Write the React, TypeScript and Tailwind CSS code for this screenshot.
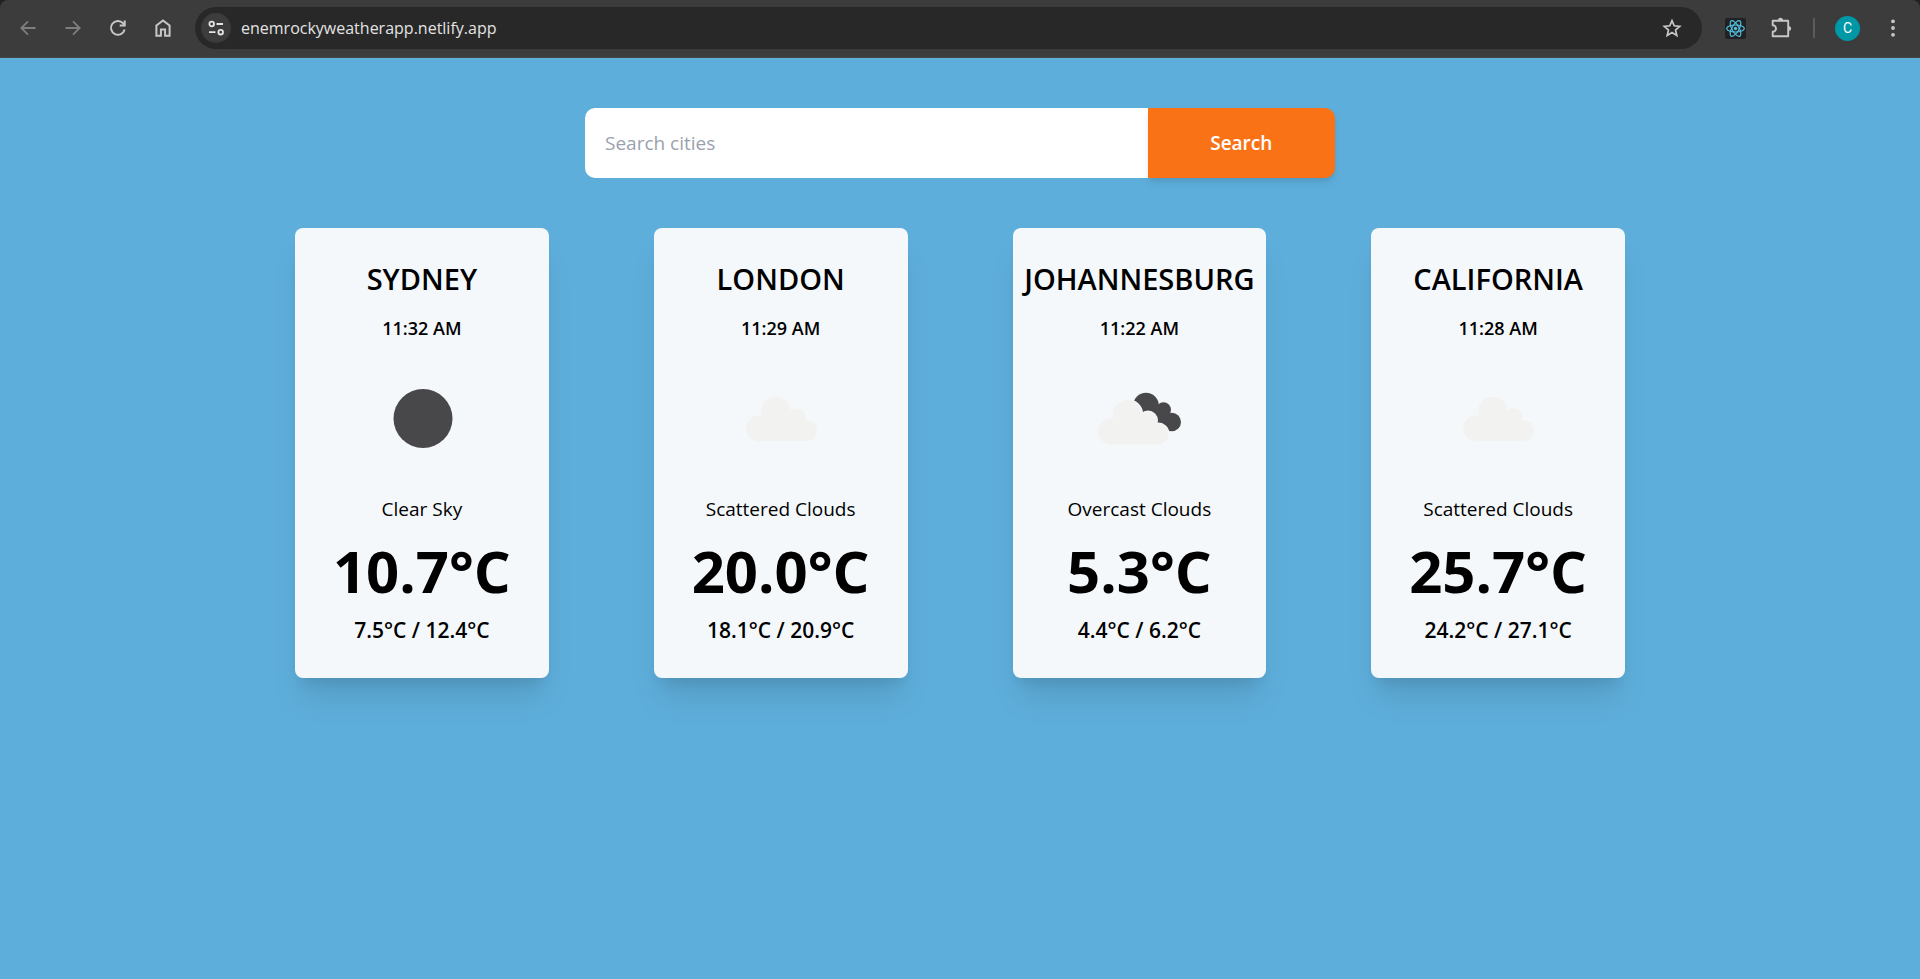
import type { ReactNode } from "react";

type Sky = "clear" | "scattered" | "overcast";

interface City {
  name: string;
  time: string;
  sky: Sky;
  label: string;
  temp: string;
  low: string;
  high: string;
}

const cities: City[] = [
  { name: "Sydney", time: "11:32 AM", sky: "clear", label: "Clear Sky", temp: "10.7", low: "7.5", high: "12.4" },
  { name: "London", time: "11:29 AM", sky: "scattered", label: "Scattered Clouds", temp: "20.0", low: "18.1", high: "20.9" },
  { name: "Johannesburg", time: "11:22 AM", sky: "overcast", label: "Overcast Clouds", temp: "5.3", low: "4.4", high: "6.2" },
  { name: "California", time: "11:28 AM", sky: "scattered", label: "Scattered Clouds", temp: "25.7", low: "24.2", high: "27.1" },
];

function CloudShape() {
  return (
    <>
      <circle cx="13" cy="31.500" r="13" />
      <circle cx="29.500" cy="14.700" r="14.700" />
      <circle cx="50" cy="20.500" r="9" />
      <circle cx="60" cy="34" r="10.500" />
      <path d="M13 44.500V25L40 18H50L60 26V44.500Z" />
    </>
  );
}

function SkyIcon({ sky }: { sky: Sky }) {
  return (
    <svg viewBox="0 0 100 100" className="size-[100px]" aria-hidden="true">
      {sky === "clear" && <circle cx="51" cy="50.500" r="29.500" fill="#48484a" />}
      {sky === "scattered" && (
        <g transform="translate(15.300 28.700)" fill="#f2f2f0">
          <CloudShape />
        </g>
      )}
      {sky === "overcast" && (
        <>
          <g fill="#48484a">
            <circle cx="57" cy="37.500" r="12.800" />
            <circle cx="74.500" cy="41.800" r="7.500" />
            <circle cx="82.800" cy="54" r="9.200" />
            <path d="M60 30L74 41L84 54L76 60L56 52Z" />
          </g>
          <g transform="translate(9 32)" fill="#f4f8fb" stroke="#f4f8fb" strokeWidth="2">
            <CloudShape />
          </g>
          <g transform="translate(9 32)" fill="#f2f2f0">
            <CloudShape />
          </g>
        </>
      )}
    </svg>
  );
}

function BarButton({ label, children }: { label: string; children: ReactNode }) {
  return (
    <button type="button" aria-label={label} className="flex size-[45px] shrink-0 items-center justify-center">
      {children}
    </button>
  );
}

function BrowserBar() {
  return (
    <div className="bg-[#202124]">
      <header className="flex h-[58px] items-center rounded-t-lg border-b border-[#474747] bg-[#3c3c3c] px-[5px] pb-px text-[#c7c7c7]">
        <BarButton label="Back">
          <svg width="20" height="20" viewBox="0 0 20 20" fill="none" stroke="#7e7e7e" strokeWidth="1.800">
            <path d="M17.500 10H3.500M10 3.300L3.300 10l6.700 6.700" />
          </svg>
        </BarButton>
        <BarButton label="Forward">
          <svg width="20" height="20" viewBox="0 0 20 20" fill="none" stroke="#7e7e7e" strokeWidth="1.800">
            <path d="M2.500 10h14M10 3.300l6.700 6.700-6.700 6.700" />
          </svg>
        </BarButton>
        <BarButton label="Reload">
          <svg width="20" height="20" viewBox="0 0 20 20" fill="none" stroke="currentColor" strokeWidth="2">
            <path d="M16.600 11.500A6.900 6.900 0 1 1 15 5.200L16.500 7" />
            <path d="M16.700 2.500v5h-5" />
          </svg>
        </BarButton>
        <BarButton label="Home">
          <svg width="20" height="20" viewBox="0 0 20 20" fill="none" stroke="currentColor" strokeWidth="2">
            <path d="M3.400 7.500L10 2.400l6.600 5.100v10.300h-4.500v-6.300H7.900v6.300H3.400z" />
          </svg>
        </BarButton>
        <div className="ml-[10px] flex h-[42px] min-w-0 flex-1 items-center rounded-full bg-[#282828] pr-5 pl-1.5">
          <button
            type="button"
            aria-label="View site information"
            className="flex size-[30px] shrink-0 items-center justify-center rounded-full bg-[#3c3c3c] text-[#e3e3e3]"
          >
            <svg width="18" height="18" viewBox="0 0 18 18" fill="none" stroke="currentColor" strokeWidth="1.800">
              <circle cx="4.700" cy="5" r="2.300" />
              <path d="M9.500 5H16M2 13.200h6.500" />
              <circle cx="13.700" cy="13.200" r="2.300" />
            </svg>
          </button>
          <input
            type="text"
            aria-label="Address"
            defaultValue="enemrockyweatherapp.netlify.app"
            className="ml-2.5 min-w-0 flex-1 bg-transparent text-base text-[#e3e3e3] outline-none"
          />
          <button type="button" aria-label="Bookmark this page">
            <svg width="20" height="20" viewBox="0 0 20 20" fill="none" stroke="currentColor" strokeWidth="1.700">
              <path d="M10 2.700l2.200 5.100 5.500.5-4.200 3.700 1.300 5.400L10 14.500l-4.800 2.900 1.300-5.400-4.200-3.700 5.500-.5z" />
            </svg>
          </button>
        </div>
        <div className="flex shrink-0 items-center">
          <button type="button" aria-label="React Developer Tools" className="ml-[23px] rounded-xs bg-[#202124]">
            <svg width="21" height="21" viewBox="0 0 21 21" fill="none" stroke="#53c1de" strokeWidth="1.200">
              <ellipse cx="10.500" cy="10.500" rx="8.800" ry="3.500" />
              <ellipse cx="10.500" cy="10.500" rx="8.800" ry="3.500" transform="rotate(60 10.500 10.500)" />
              <ellipse cx="10.500" cy="10.500" rx="8.800" ry="3.500" transform="rotate(120 10.500 10.500)" />
              <circle cx="10.500" cy="10.500" r="1.700" fill="#53c1de" stroke="none" />
            </svg>
          </button>
          <button type="button" aria-label="Extensions" className="ml-6">
            <svg width="22" height="22" viewBox="0 0 22 22" fill="none" stroke="currentColor" strokeWidth="1.900">
              <path strokeLinejoin="round" d="M2.700 3.700h15.500v15.500H2.700v-4.400a3.300 3.300 0 0 0 0-6.600z" />
              <path fill="currentColor" stroke="none" d="M8 3.300a2.500 2.500 0 0 1 5 0zM18.700 9a2.500 2.500 0 0 1 0 5z" />
            </svg>
          </button>
          <span className="ml-[21px] h-5 w-0.5 bg-[#5c5c5c]" />
          <button
            type="button"
            aria-label="Profile"
            className="ml-5 flex size-[25px] items-center justify-center rounded-full bg-[#0097a7] font-['Roboto',sans-serif] text-sm text-white"
          >
            C
          </button>
          <div className="ml-[10px]">
            <BarButton label="Menu">
              <svg width="20" height="20" viewBox="0 0 20 20" fill="currentColor">
                <circle cx="10" cy="3.300" r="1.900" />
                <circle cx="10" cy="10" r="1.900" />
                <circle cx="10" cy="16.800" r="1.900" />
              </svg>
            </BarButton>
          </div>
        </div>
      </header>
    </div>
  );
}

function CityCard({ city }: { city: City }) {
  return (
    <article className="flex flex-col items-center rounded-lg bg-[#f4f8fb] py-8 text-black shadow-[0_25px_31px_-6px_rgba(0,0,0,0.1),0_10px_13px_-7px_rgba(0,0,0,0.1)]">
      <h2 className="text-[29px] leading-[38px] font-semibold uppercase">{city.name}</h2>
      <p className="mt-4 text-lg leading-7 font-semibold">{city.time}</p>
      <div className="mt-[26px]">
        <SkyIcon sky={city.sky} />
      </div>
      <p className="mt-[26px] text-[19px] leading-[30px]">{city.label}</p>
      <p className="mt-3 text-[58px] leading-[70px] font-bold">{city.temp}°C</p>
      <p className="mt-2 text-[21px] leading-8 font-semibold">
        {city.low}°C / {city.high}°C
      </p>
    </article>
  );
}

export default function App() {
  return (
    <div className="flex min-h-screen flex-col bg-[#5eaedb] font-['Open_Sans','Noto_Sans',sans-serif]">
      <BrowserBar />
      <main className="flex flex-col items-center px-6 pt-[50px] pb-12">
        <form
          role="search"
          onSubmit={(event) => event.preventDefault()}
          className="flex h-[70px] w-full max-w-[750px]"
        >
          <input
            type="text"
            aria-label="Search cities"
            placeholder="Search cities"
            className="w-3/4 min-w-0 rounded-l-[10px] bg-white px-5 text-[19px] text-black outline-none placeholder:text-gray-400"
          />
          <button
            type="submit"
            className="w-1/4 rounded-r-[10px] bg-[#f97316] text-[19px] font-semibold text-white shadow-[0_5px_8px_-1px_rgba(0,0,0,0.1),0_3px_5px_-3px_rgba(0,0,0,0.1)]"
          >
            Search
          </button>
        </form>
        <section
          aria-label="City weather"
          className="mt-[50px] grid w-full max-w-[1330px] grid-cols-1 gap-[50px] sm:grid-cols-2 lg:grid-cols-4 xl:gap-[105px]"
        >
          {cities.map((city) => (
            <CityCard key={city.name} city={city} />
          ))}
        </section>
      </main>
    </div>
  );
}
